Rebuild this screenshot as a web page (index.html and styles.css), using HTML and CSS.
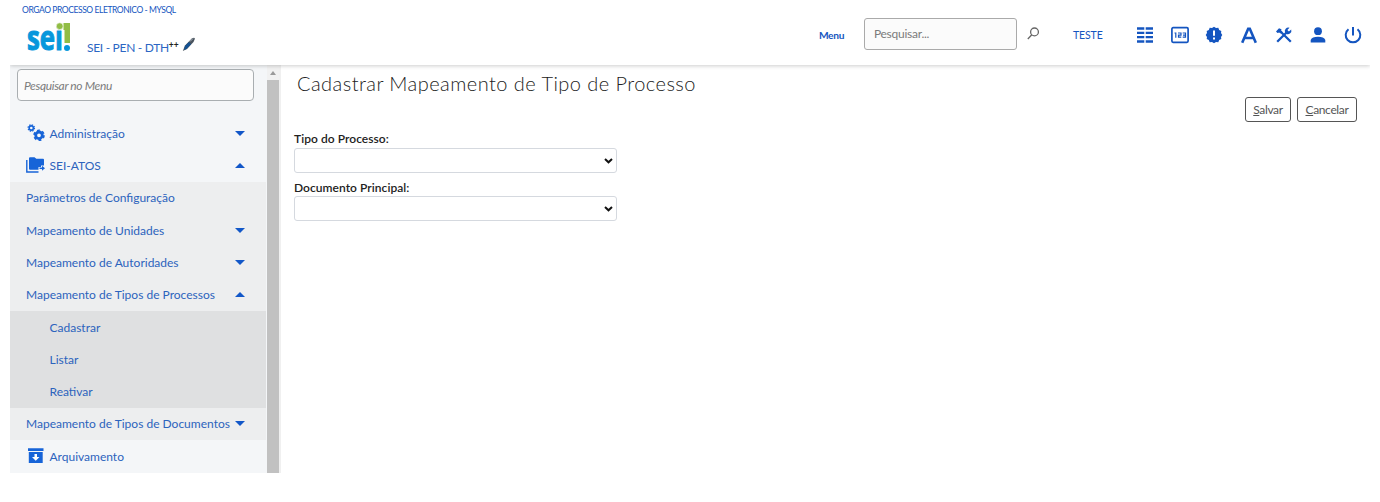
FILE: index.html
```
<!DOCTYPE html>
<html lang="pt-BR">
<head>
<meta charset="utf-8">
<title>SEI - Cadastrar Mapeamento de Tipo de Processo</title>
<link rel="stylesheet" href="styles.css">
</head>
<body>
<div class="page">
  <header class="header">
    <div class="brand">
      <div class="org">ORGAO PROCESSO ELETRONICO - MYSQL</div>
      <div class="brand-row">
        <svg class="logo" width="48" height="46" viewBox="-2 -10 48 46"><text class="logo-text" x="0" y="27" textLength="36" lengthAdjust="spacingAndGlyphs">sei</text><circle class="logo-dot" cx="32.700" cy="3.200" r="3.400"/><path class="logo-mark" d="M36.500 0H43V20H37.500V7H36.500Z"/><circle class="logo-stop" cx="40" cy="25" r="3"/></svg>
        <span class="env">SEI - PEN - DTH<b>++</b></span>
        <svg class="pen" width="14" height="15" viewBox="0 0 14 15"><path d="M.8 14L3 8.500L10 1.300Q13-.2 12.800 2L11.500 5L5 12Z" fill="#4a545e"/><path d="M3 9L7 5L9 7.300L4.500 12L2 13Z" fill="#145293"/><path d="M8 4.500L11 1.500" stroke="#aab4bd"/></svg>
      </div>
    </div>
    <div class="tools">
      <a class="menu-link">Menu</a>
      <input class="search" placeholder="Pesquisar...">
      <svg class="lens" width="13" height="13" viewBox="0 0 13 13"><circle cx="7.500" cy="4.900" r="3.900"/><path d="M4.800 7.700L.8 12"/></svg>
      <a class="unit">TESTE</a>
      <div class="icons">
        <svg width="18" height="18" viewBox="0 0 18 18"><path d="M1 2.500H8.300M9.700 2.500H17M1 6.800H8.300M9.700 6.800H17M1 11.200H8.300M9.700 11.200H17M1 15.500H8.300M9.700 15.500H17" stroke="currentColor" stroke-width="2.300"/></svg>
        <svg width="18" height="18" viewBox="0 0 18 18"><rect x=".9" y="1.700" width="16.200" height="14.600" rx="1.200" fill="none" stroke="currentColor" stroke-width="1.700"/><path d="M3.500 7H4.800V11.700M7 7H10V9.200H7.500V11.200H10.300M11.700 7H14.500V11.200H11.700M12 9.200H14.500" fill="none" stroke="currentColor" stroke-width="1.200"/></svg>
        <svg width="18" height="18" viewBox="0 0 18 18"><path d="M9 .8L11 2L13.300 1.700L14.200 3.900L16.300 4.900L16 7.100L17.300 9L16 10.900L16.300 13.100L14.200 14.100L13.300 16.300L11 16L9 17.200L7 16L4.700 16.300L3.800 14.100L1.700 13.100L2 10.900L.7 9L2 7.100L1.700 4.900L3.800 3.900L4.700 1.700L7 2Z" fill="currentColor"/><path d="M9 4.500V9.800M9 11.500V13.500" stroke="#fff" stroke-width="2"/></svg>
        <svg width="18" height="18" viewBox="0 0 18 18"><path d="M2.200 16.800L8.200 2.700H9.800L15.800 16.800M5 12H13" fill="none" stroke="currentColor" stroke-width="2.600"/></svg>
        <svg width="18" height="18" viewBox="0 0 18 18"><path d="M2.200 15.800L11.500 6.500M5 5L15.800 15.800" stroke="currentColor" stroke-width="2.300"/><path d="M14.500 1.800L12.400 4.100L13.900 5.600L16.200 3.500A3.600 3.600 0 0 1 11.300 7.900L10.100 6.700A3.600 3.600 0 0 1 14.500 1.800Z" fill="currentColor"/><path d="M1 5.500L4 2.300L6.500 3.300L6 4.500L7.500 6L5.500 7.600L4.300 6.500L2.500 7Z" fill="currentColor"/></svg>
        <svg width="18" height="18" viewBox="0 0 18 18"><circle cx="9" cy="5.200" r="3.900" fill="currentColor"/><path d="M1.700 16.500V14Q3 10.700 9 10.700T16.300 14V16.500Z" fill="currentColor"/></svg>
        <svg width="18" height="18" viewBox="0 0 18 18"><path d="M9 1V9.500M4.500 3.300A7.300 7.300 0 1 0 13.500 3.300" fill="none" stroke="currentColor" stroke-width="2"/></svg>
      </div>
    </div>
  </header>
  <div class="body">
    <aside class="sidebar">
      <div class="menu">
        <div class="filter"><input class="menu-search" placeholder="Pesquisar no Menu"></div>
        <a class="item"><svg class="mi" width="20" height="18" viewBox="0 0 20 18"><g fill="none" stroke="currentColor"><circle cx="5.300" cy="4" r="2.100" stroke-width="1.600"/><circle cx="5.300" cy="4" r="3.200" stroke-width="1.200" stroke-dasharray="1.400 1.112"/><circle cx="13" cy="11.300" r="3.300" stroke-width="2.800"/><circle cx="13" cy="11.300" r="4.900" stroke-width="1.800" stroke-dasharray="2.800 2.330"/></g></svg><span>Administração</span><i class="down"></i></a>
        <a class="item"><svg class="mi" width="20" height="18" viewBox="0 0 20 18"><path d="M3 2.200Q3 1.200 4 1.200H8.500L10.300 2.800H17Q18 2.800 18 3.800V9.500H15V11H12.500V13.800H4Q3 13.800 3 12.800Z" fill="currentColor"/><path d="M.8 4V16H12.500" fill="none" stroke="currentColor" stroke-width="1.400"/><path d="M13.500 12.300H17" stroke="currentColor" stroke-width="1.500"/><path d="M16 9.800L19 12.300L16 14.800Z" fill="currentColor"/></svg><span>SEI-ATOS</span><i class="up"></i></a>
        <div class="level2">
          <a class="item"><span>Parâmetros de Configuração</span></a>
          <a class="item"><span>Mapeamento de Unidades</span><i class="down"></i></a>
          <a class="item"><span>Mapeamento de Autoridades</span><i class="down"></i></a>
          <a class="item"><span>Mapeamento de Tipos de Processos</span><i class="up"></i></a>
          <div class="level3">
            <a class="item"><span>Cadastrar</span></a>
            <a class="item"><span>Listar</span></a>
            <a class="item"><span>Reativar</span></a>
          </div>
          <a class="item"><span>Mapeamento de Tipos de Documentos</span><i class="down"></i></a>
        </div>
        <a class="item"><svg class="mi" width="20" height="18" viewBox="0 0 20 18"><path d="M2 1.300H17.500V4H2ZM2.800 5H16.700V16H2.800Z" fill="currentColor"/><path d="M8.500 7H11V10H13.500L9.750 13.700L6 10H8.500Z" fill="#fff"/></svg><span>Arquivamento</span></a>
      </div>
      <div class="scroll"><i class="scroll-up"></i><div class="thumb"></div></div>
    </aside>
    <main class="content">
      <h1 class="title">Cadastrar Mapeamento de Tipo de Processo</h1>
      <div class="actions"><button class="btn save"><u>S</u>alvar</button><button class="btn cancel"><u>C</u>ancelar</button></div>
      <label class="label tipo">Tipo do Processo:</label>
      <div class="select"><svg width="9" height="6" viewBox="0 0 9 6"><path d="M1 1L4.500 4.300L8 1"/></svg></div>
      <label class="label docp">Documento Principal:</label>
      <div class="select"><svg width="9" height="6" viewBox="0 0 9 6"><path d="M1 1L4.500 4.300L8 1"/></svg></div>
    </main>
  </div>
</div>
</body>
</html>
```
FILE: styles.css
```
* { box-sizing: border-box; }
body { margin: 0; background: #fff; font-family: Lato, "Open Sans", sans-serif; color: #222; overflow: hidden; }
.page { width: 1360px; margin-left: 10px; height: 502px; }
.header { height: 65px; display: flex; justify-content: space-between; position: relative; background: #fff; box-shadow: 0 1px 4px rgba(0,0,0,.2); clip-path: inset(0 0 -8px 0); z-index: 1; color: #1455c0; }
.brand { padding: 4px 0 0 12px; }
.org { font-size: 8.5px; line-height: 12px; letter-spacing: -.42px; white-space: nowrap; }
.brand-row { display: flex; padding: 7px 0 0 5px; }
.logo { margin: -10px 0 -6px -2px; }
.logo-text { font: bold 34px "Open Sans", sans-serif; fill: #0797dc; stroke: #0797dc; stroke-width: 1px; }
.logo-dot, .logo-mark { fill: #91bd45; }
.logo-dot { stroke: #fff; stroke-width: .6px; }
.logo-stop { fill: #0797dc; }
.env { font-size: 12px; line-height: 14px; letter-spacing: -.3px; margin: 18px 0 0 14px; color: #2c66c4; white-space: nowrap; }
.env b { color: #222; font-size: 8.5px; letter-spacing: 0; vertical-align: 4px; line-height: 1px; }
.pen { margin: 14px 0 0 3px; }
.tools { display: flex; align-items: center; padding: 4px 8px 0 0; }
.menu-link { font-size: 10.2px; font-weight: bold; letter-spacing: -.3px; width: 45px; }
.search { width: 153px; height: 32px; margin-top: -2px; border: 1px solid #aaa; border-radius: 3px; background: #fbfbfb; padding: 0 9px; font: 12px Lato, sans-serif; letter-spacing: -.25px; }
input::placeholder { color: #7b7b7b; opacity: 1; }
.lens { margin: -3px 0 0 10px; fill: none; stroke: #666; stroke-width: 1.300; }
.unit { font-size: 10.5px; letter-spacing: -.1px; width: 63px; margin-left: 33px; }
.icons { display: flex; gap: 16.700px; }
.icons svg { display: block; }
.body { display: flex; height: 408px; }
.sidebar { width: 271px; display: flex; background: #f4f6f8; border-right: 2px solid #f0f0f0; }
.menu { width: 257px; }
.filter { height: 52px; padding: 4px 0 0 7px; }
.menu-search { width: 237px; height: 32px; border: 1px solid #a9aeb1; border-radius: 4px; background: #fbfbfb; padding: 1px 6px 0; font: italic 12px Lato, sans-serif; letter-spacing: -.35px; }
.item { height: 32.300px; display: flex; align-items: center; padding: 0 22px 0 16px; color: #2c63bd; font-size: 12px; white-space: nowrap; }
.item span { padding-top: .3px; }
.mi { color: #1764d8; margin-right: 3.500px; flex: none; }
.down, .up { margin-left: auto; border: 4.500px solid transparent; flex: none; }
.down { border: 5px solid transparent; border-top-color: #1257c8; border-bottom: 0; }
.up { border: 5px solid transparent; border-bottom-color: #1257c8; border-top: 0; }
.level2 { background: #edeeef; width: 256px; }
.level2 .item { padding-right: 21px; }
.level3 { background: #dfe0e1; }
.level3 .item { padding-left: 39.500px; }
.scroll { width: 12px; padding-top: 6px; background: #f1f1f1; display: flex; flex-direction: column; align-items: center; }
.scroll-up { border: 3px solid transparent; border-top: 0; border-bottom: 4px solid #999; }
.thumb { width: 12px; margin-top: 5px; flex: 1; background: #c1c1c1; }
.content { flex: 1; padding: 5px 13px 0 13px; }
.title { margin: 0 0 0 3px; font-weight: 300; font-size: 20px; line-height: 26px; letter-spacing: .45px; }
.actions { display: flex; justify-content: flex-end; gap: 6px; margin-top: 1px; height: 26px; }
.btn { height: 25px; padding: 0; border: 1px solid #555; border-radius: 3px; background: #fff; color: #555; font: 12px Lato, sans-serif; letter-spacing: -.35px; }
.save { width: 46px; }
.cancel { width: 60px; }
.label { display: block; font-size: 12px; line-height: 16px; font-weight: 600; color: #222; letter-spacing: .05px; }
.tipo { margin-top: 8px; }
.docp { margin-top: 7px; }
.select { width: 323px; height: 25px; border: 1px solid #d5d9df; border-radius: 3px; display: flex; align-items: center; justify-content: flex-end; padding-right: 3px; }
.tipo + .select { margin-top: 1px; }
.select svg { fill: none; stroke: #111; stroke-width: 2; }
```
